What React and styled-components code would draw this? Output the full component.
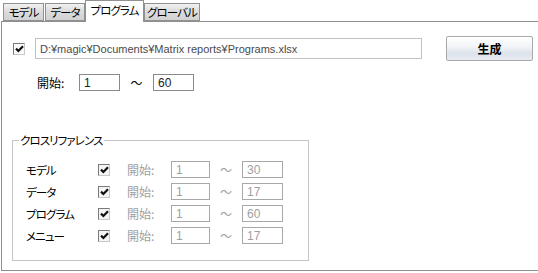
import React from "react";
import styled, { createGlobalStyle, css } from "styled-components";

const Global = createGlobalStyle`
  html, body { margin: 0; padding: 0; background: #fff; }
  * { box-sizing: border-box; }
`;

const kana = css`
  font-size: 11.5px;
  letter-spacing: -0.9px;
`;

const Root = styled.div`
  width: 538px;
  height: 273px;
  overflow: hidden;
  background: #fff;
  font-family: "Noto Sans CJK JP", sans-serif;
  font-feature-settings: "palt";
  font-size: 12px;
  color: #000;
`;

const TabBar = styled.div`
  position: relative;
  z-index: 2;
  display: flex;
  align-items: flex-end;
  height: 21px;
  padding-left: 3px;
`;

const Tab = styled.div`
  width: ${(p) => p.$w}px;
  height: ${(p) => (p.$active ? 22 : 18)}px;
  margin-right: ${(p) => p.$gap || 0}px;
  margin-bottom: ${(p) => (p.$active ? -1 : 0)}px;
  border: 1px solid #919191;
  border-bottom: ${(p) => (p.$active ? "none" : "1px solid #919191")};
  background: ${(p) =>
    p.$active ? "#fff" : "linear-gradient(#f2f2f2, #dcdcdc 45%, #d2d2d2)"};
  display: flex;
  justify-content: center;
  align-items: flex-start;
  padding-top: ${(p) => (p.$active ? 2 : 1)}px;
  line-height: 15px;
  white-space: nowrap;
  ${kana}
`;

const Panel = styled.div`
  margin-left: 1px;
  height: 250px;
  border-top: 1px solid #8f8f8f;
  border-left: 1px solid #8f8f8f;
  border-bottom: 1px solid #8f8f8f;
  padding: 14px 0 0 10px;
`;

const FileRow = styled.div`
  display: flex;
  align-items: center;
  height: 25px;
  padding-left: 1px;
`;

const Box = styled.span`
  display: inline-flex;
  align-items: center;
  justify-content: center;
  flex: none;
  width: 12px;
  height: 12px;
  border: 1px solid;
  border-color: #7a7a7a #c8c8c8 #c8c8c8 #7a7a7a;
  background: ${(p) => (p.$dim ? "#f4f4f4" : "#fbfbfb")};
`;

const Check = ({ dim }) => (
  <Box $dim={dim}>
    <svg width="9" height="8" viewBox="0 0 9 8">
      <path d="M1 3.6 L3.4 6 L8 1.2" fill="none" stroke="#111" strokeWidth="2.2" />
    </svg>
  </Box>
);

const PathField = styled.div`
  width: 387px;
  height: 21px;
  margin-left: 10px;
  border: 1px solid #c2c2c2;
  padding-left: 4px;
  display: flex;
  align-items: center;
  font-family: "Liberation Sans", Arial, sans-serif;
  font-size: 11px;
  color: #4a4a4a;
  white-space: nowrap;
`;

const Button = styled.div`
  width: 87px;
  height: 25px;
  margin-left: 24px;
  border: 1px solid #a9a9a9;
  border-radius: 2px;
  background: linear-gradient(#ffffff, #f3f5f8 40%, #dce3ea 72%, #e8edf2);
  display: flex;
  align-items: center;
  justify-content: center;
  font-weight: bold;
  font-size: 12px;
`;

const RangeRow = styled.div`
  display: flex;
  align-items: center;
  height: 17px;
  margin-top: 13px;
  padding-left: 25px;
`;

const Label = styled.span`
  width: ${(p) => p.$w}px;
  flex: none;
  color: ${(p) => (p.$dim ? "#a0a0a0" : "#000")};
  line-height: 17px;
  white-space: nowrap;
  padding-top: ${(p) => p.$down || 0}px;
  ${(p) => p.$kana && kana}
`;

const NumBox = styled.div`
  width: ${(p) => p.$w}px;
  height: 17px;
  flex: none;
  border: 1px solid ${(p) => (p.$dim ? "#a8a8a8" : "#8a8a8a")};
  padding-left: 4px;
  display: flex;
  align-items: center;
  font-family: "Liberation Sans", Arial, sans-serif;
  font-size: 12px;
  color: ${(p) => (p.$dim ? "#a0a0a0" : "#222")};
`;

const Tilde = styled.span`
  width: ${(p) => p.$w}px;
  flex: none;
  text-align: center;
  color: ${(p) => (p.$dim ? "#a0a0a0" : "#000")};
  line-height: 17px;
`;

const Group = styled.fieldset`
  width: 297px;
  height: 129px;
  margin: 41px 0 0 0;
  padding: 0;
  border: 1px solid #c4c4c4;
`;

const Legend = styled.legend`
  margin-left: 6px;
  padding: 0 1px;
  line-height: 16px;
  ${kana}
`;

const Rows = styled.div`
  display: flex;
  flex-direction: column;
  gap: 5px;
  padding: 13px 0 0 13px;
`;

const XRow = styled.div`
  display: flex;
  align-items: center;
  height: 17px;
`;

const CheckSlot = styled.span`
  display: flex;
  width: 29px;
  flex: none;
`;

const refs = [
  { name: "モデル", from: "1", to: "30" },
  { name: "データ", from: "1", to: "17" },
  { name: "プログラム", from: "1", to: "60" },
  { name: "メニュー", from: "1", to: "17" },
];

export default function App() {
  return (
    <Root>
      <Global />
      <TabBar>
        <Tab $w={41} $gap={1}>モデル</Tab>
        <Tab $w={40}>データ</Tab>
        <Tab $w={59} $active>プログラム</Tab>
        <Tab $w={56}>グローバル</Tab>
      </TabBar>
      <Panel>
        <FileRow>
          <Check />
          <PathField>D:¥magic¥Documents¥Matrix reports¥Programs.xlsx</PathField>
          <Button>生成</Button>
        </FileRow>
        <RangeRow>
          <Label $w={42}>開始:</Label>
          <NumBox $w={41}>1</NumBox>
          <Tilde $w={33}>～</Tilde>
          <NumBox $w={41}>60</NumBox>
        </RangeRow>
        <Group>
          <Legend>クロスリファレンス</Legend>
          <Rows>
            {refs.map((r) => (
              <XRow key={r.name}>
                <Label $w={72} $down={2} $kana>{r.name}</Label>
                <CheckSlot>
                  <Check dim />
                </CheckSlot>
                <Label $w={44} $dim>開始:</Label>
                <NumBox $w={39} $dim>{r.from}</NumBox>
                <Tilde $w={32} $dim>～</Tilde>
                <NumBox $w={41} $dim>{r.to}</NumBox>
              </XRow>
            ))}
          </Rows>
        </Group>
      </Panel>
    </Root>
  );
}
